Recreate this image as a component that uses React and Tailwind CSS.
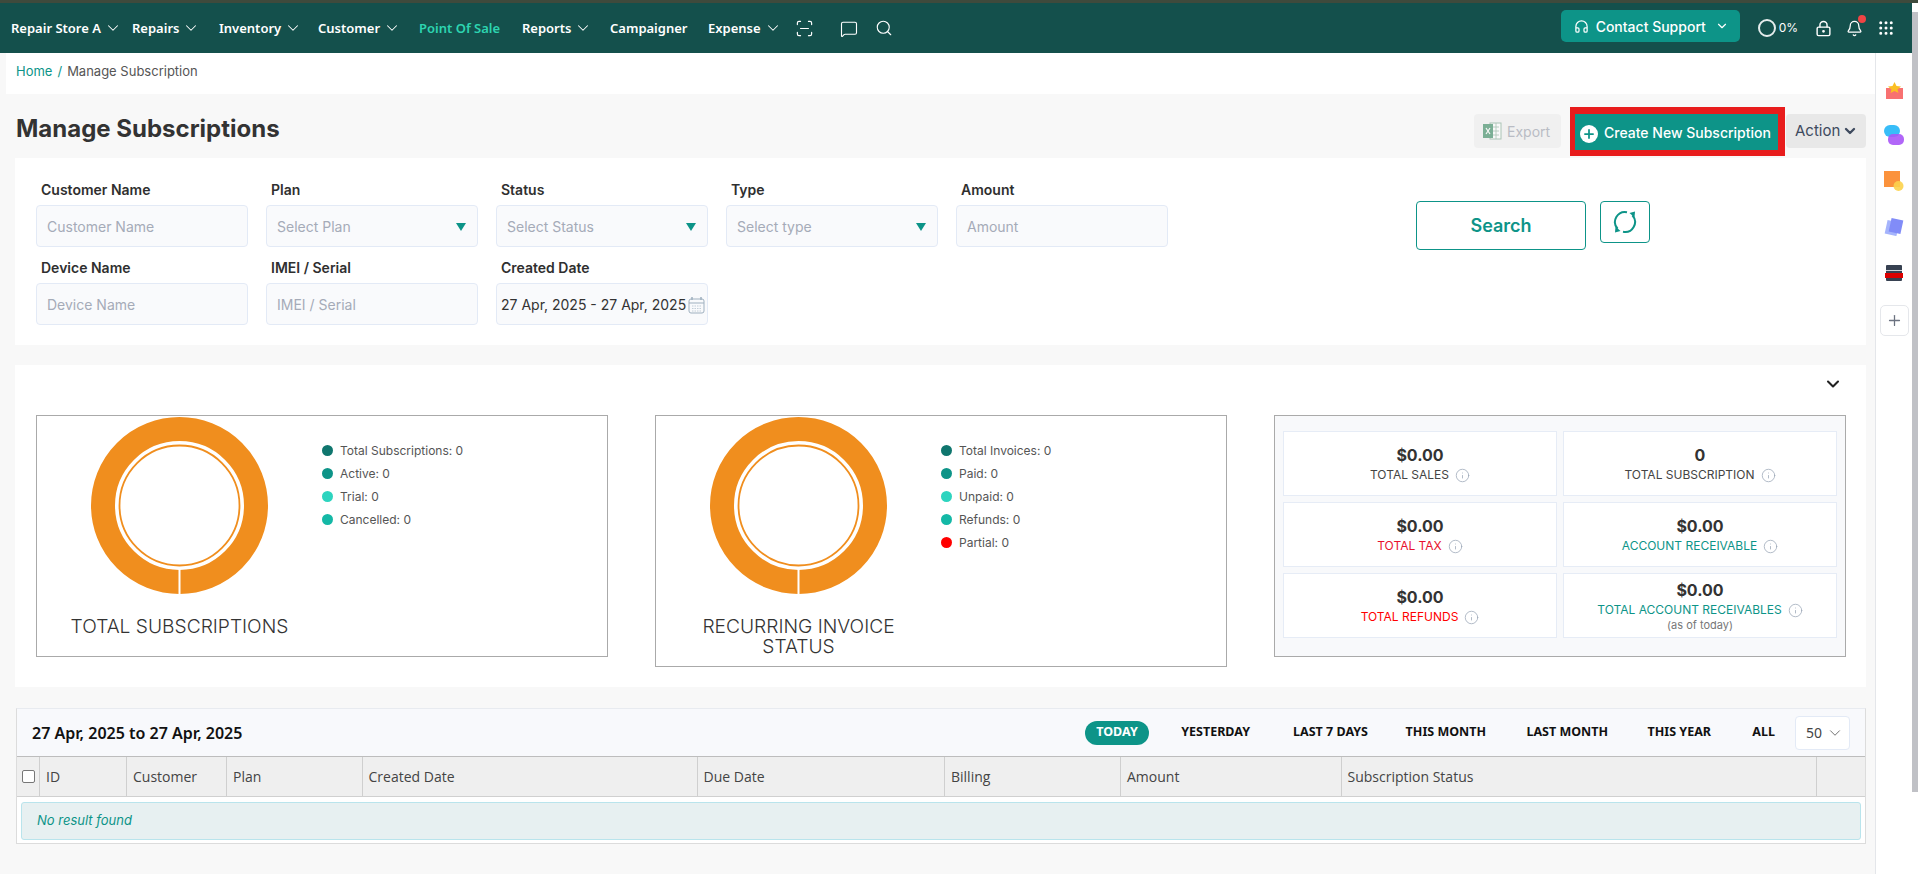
import { ChevronDown, ScanLine, MessageSquare, Search, Headphones, LockKeyhole, Bell, Grip, Info, Plus } from "lucide-react"

const navItems = [
  { label: "Repair Store A", width: "w-[121px]", chevron: true },
  { label: "Repairs", width: "w-[87px]", chevron: true },
  { label: "Inventory", width: "w-[99px]", chevron: true },
  { label: "Customer", width: "w-[101px]", chevron: true },
  { label: "Point Of Sale", width: "w-[103px]", active: true },
  { label: "Reports", width: "w-[88px]", chevron: true },
  { label: "Campaigner", width: "w-[98px]" },
  { label: "Expense", width: "w-[87px]", chevron: true },
]

const columns = ["ID", "Customer", "Plan", "Created Date", "Due Date", "Billing", "Amount", "Subscription Status", ""]
const ranges = [
  { label: "YESTERDAY", width: "w-[101px]" },
  { label: "LAST 7 DAYS", width: "w-[118px]" },
  { label: "THIS MONTH", width: "w-[118px]" },
  { label: "LAST MONTH", width: "w-[122px]" },
  { label: "THIS YEAR", width: "w-[103px]" },
  { label: "ALL", width: "w-[64px]" },
]

const Donut = () => (
  <svg width="177" height="177" viewBox="0 0 177 177">
    <circle cx="88.5" cy="88.5" r="76.5" fill="none" stroke="#f08e1e" strokeWidth="24" />
    <circle cx="88.5" cy="88.5" r="60" fill="none" stroke="#f08e1e" strokeWidth="1.8" />
    <rect x="87.5" y="150" width="2" height="27" fill="#fff" />
  </svg>
)

const ChartBox = ({ title, items, height }) => (
  <div className={`flex w-[572px] border border-[#aaa] bg-white ${height}`}>
    <div className="w-[285px] shrink-0 pt-[1px] flex flex-col items-center">
      <Donut />
      <div className="mt-[22px] max-w-[230px] text-center text-[19.2px] leading-[20px] text-[#333] font-light">{title}</div>
    </div>
    <div className="pt-[23px]">
      {items.map((item) => (
        <div key={item.label} className="flex items-center h-[23px] text-[12px] text-[#555]">
          <span className={`w-[11px] h-[11px] rounded-full mr-[7px] ${item.color}`}></span>
          {item.label}
        </div>
      ))}
    </div>
  </div>
)

const Stat = ({ value, label, color = "text-[#444]", note }) => (
  <div className="h-[65px] border border-[#e6ecf6] bg-white flex flex-col items-center justify-center">
    <div className="text-[16px] leading-[22px] font-bold text-[#333]">{value}</div>
    <div className={`flex items-center text-[12px] leading-[16px] mt-[1px] ${color}`}>
      {label}
      <Info size={15} strokeWidth={1.2} className="ml-[6px] text-[#9aa5b5]" />
    </div>
    {note && <div className="text-[11px] leading-[14px] text-[#777]">{note}</div>}
  </div>
)

const Field = ({ label, placeholder, select, children }) => (
  <div>
    <div className="ml-[5px] mb-[5px] h-[20px] text-[14px] leading-[20px] font-semibold text-[#2f2f2f]">{label}</div>
    <div className="h-[42px] rounded-[4px] border border-[#e3eaf6] bg-[#f9fafc] pt-[1px] pl-[10px] pr-[6px] flex items-center justify-between text-[14px] text-[#a5abb8]">
      {children || placeholder}
      {select && (
        <svg width="12" height="10" viewBox="0 0 12 10" className="mr-[4px]">
          <polygon points="1,1 11,1 6,9" fill="#0d9488" />
        </svg>
      )}
    </div>
  </div>
)

export default function App() {
  return (
    <div className="h-[874px] w-[1918px] overflow-hidden flex flex-col bg-white text-[#333] font-['Inter',sans-serif]">
      <div className="h-[3px] bg-[#3f4a3c] shrink-0"></div>
      <div className="flex flex-1 min-h-0">
        <div className="flex-1 flex flex-col min-w-0">
          {/* top nav */}
          <div className="h-[50px] shrink-0 bg-[#14504c] flex items-center pl-[11px] text-white font-['Noto_Sans',sans-serif] text-[13px] font-semibold">
            {navItems.map((item) => (
              <div key={item.label} className={`${item.width} flex items-center ${item.active ? "text-[#2dd4b0]" : ""}`}>
                <span className="whitespace-nowrap pt-[2px]">{item.label}</span>
                {item.chevron && <ChevronDown size={18} strokeWidth={1.4} className="ml-[3px]" />}
              </div>
            ))}
            <ScanLine size={19} strokeWidth={1.5} />
            <MessageSquare size={18} strokeWidth={1.5} className="ml-[26px] mt-[2px]" />
            <Search size={18} strokeWidth={1.5} className="ml-[17px]" />
            <div className="ml-auto mb-[4px] w-[179px] h-[32px] rounded-[5px] bg-[#0d9488] flex items-center pl-[13px] font-['Inter',sans-serif] text-[14px] font-medium">
              <Headphones size={15} strokeWidth={2} />
              <span className="ml-[7px]">Contact Support</span>
              <ChevronDown size={14} strokeWidth={2} className="ml-[9px]" />
            </div>
            <div className="ml-[18px] w-[18px] h-[18px] rounded-full border-2 border-[#e5ecec]"></div>
            <span className="ml-[3px] text-[12px] font-['Inter',sans-serif] font-normal">0%</span>
            <LockKeyhole size={17} strokeWidth={2} className="ml-[17px]" />
            <div className="relative ml-[14px] flex">
              <Bell size={17} strokeWidth={1.8} />
              <span className="absolute -top-[5px] -right-[3px] w-[8px] h-[8px] rounded-full bg-[#ef4444]"></span>
            </div>
            <Grip size={18} strokeWidth={2} className="ml-[14px] mr-[17px]" />
          </div>

          <div className="flex flex-1 min-h-0">
            <main className="flex-1 min-w-0 bg-[#f8f8f8] border-r border-[#e4e6ea]">
              {/* breadcrumb */}
              <div className="ml-[6px] h-[41px] bg-white pl-[10px] pt-[8px] text-[13px] leading-[20px] text-[#555]">
                <span className="text-[#0d9488]">Home</span>
                <span className="mx-[5px] text-[#0d9488]">/</span>
                Manage Subscription
              </div>

              {/* page header */}
              <div className="h-[64px] flex items-start pl-[16px] pr-[9px]">
                <h1 className="mt-[20px] text-[24px] leading-[30px] font-bold text-[#333]">Manage Subscriptions</h1>
                <div className="ml-auto mt-[20px] w-[87px] h-[34px] rounded-[4px] bg-[#f0f0f0] flex items-center pl-[8px] text-[14px] text-[#b9bcc4]">
                  <svg width="20" height="18" viewBox="0 0 20 18" className="opacity-60">
                    <rect x="8" y="1" width="11" height="16" fill="#fff" stroke="#7fa88f" />
                    <path d="M11 5h6M11 9h6M11 13h6M14 1v16" stroke="#7fa88f" strokeWidth="0.8" />
                    <rect x="1" y="2" width="10" height="14" fill="#2f855a" />
                    <path d="M4 6l4 6M8 6l-4 6" stroke="#fff" strokeWidth="1.2" />
                  </svg>
                  <span className="ml-[5px]">Export</span>
                </div>
                <div className="ml-[9px] mt-[13px] border-[#e81c1c] border-l-[5px] border-r-[7px] border-t-[7px] border-b-[6px]">
                  <div className="w-[203px] h-[36px] bg-[#0d9488] flex items-center pl-[5px] text-[14px] font-medium text-white">
                    <span className="w-[18px] h-[18px] mt-[3px] rounded-full bg-white flex items-center justify-center">
                      <Plus size={14} strokeWidth={3} className="text-[#0d9488]" />
                    </span>
                    <span className="ml-[6px] whitespace-nowrap">Create New Subscription</span>
                  </div>
                </div>
                <div className="ml-[1px] mt-[20px] w-[80px] h-[34px] rounded-[4px] bg-[#e8e8e8] flex items-center pl-[9px] text-[15px] text-[#3e4a5e]">
                  Action
                  <ChevronDown size={16} strokeWidth={3.5} className="ml-[2px]" />
                </div>
              </div>

              {/* filters */}
              <section className="ml-[15px] mr-[9px] h-[187px] bg-white pl-[21px] pt-[22px] flex items-start">
                <div className="grid grid-cols-[repeat(5,212px)] gap-x-[18px] gap-y-[11px]">
                  <Field label="Customer Name" placeholder="Customer Name" />
                  <Field label="Plan" placeholder="Select Plan" select />
                  <Field label="Status" placeholder="Select Status" select />
                  <Field label="Type" placeholder="Select type" select />
                  <Field label="Amount" placeholder="Amount" />
                  <Field label="Device Name" placeholder="Device Name" />
                  <Field label="IMEI / Serial" placeholder="IMEI / Serial" />
                  <Field label="Created Date">
                    <span className="-ml-[6px] whitespace-nowrap text-[#333]">27 Apr, 2025 - 27 Apr, 2025</span>
                    <svg width="17" height="18" viewBox="0 0 17 18" className="-mr-[4px] shrink-0">
                      <rect x="1" y="3" width="15" height="14" rx="2" fill="none" stroke="#9fb0bf" />
                      <path d="M1 7h15" stroke="#9fb0bf" />
                      <path d="M4 1v3M13 1v3" stroke="#9fb0bf" strokeWidth="1.5" />
                      <path d="M4 10h9M4 12.5h9M4 15h9" stroke="#c3ced8" strokeDasharray="1.5 1" />
                    </svg>
                  </Field>
                </div>
                <button className="ml-[248px] mt-[21px] w-[170px] h-[49px] rounded-[4px] border border-[#0d9488] text-[18px] font-semibold text-[#0d9488]">
                  Search
                </button>
                <button className="ml-[14px] mt-[21px] w-[50px] h-[42px] rounded-[4px] border border-[#0d9488] flex items-center justify-center">
                  <svg width="26" height="26" viewBox="0 0 26 26" fill="none" stroke="#0d9488" strokeWidth="2">
                    <path d="M15 3.2A10 10 0 0 0 5.6 19.7" />
                    <path d="M11 22.8A10 10 0 0 0 20.4 6.3" />
                    <polygon points="17.5,4 23,2.5 22.5,8.5" fill="#0d9488" stroke="none" />
                    <polygon points="8.5,22 3,23.5 3.5,17.5" fill="#0d9488" stroke="none" />
                  </svg>
                </button>
              </section>

              {/* charts */}
              <section className="relative ml-[15px] mr-[9px] mt-[20px] h-[322px] bg-white pl-[21px] pt-[50px] flex items-start">
                <ChevronDown size={20} strokeWidth={2.5} className="absolute top-[9px] right-[23px] text-[#222]" />
                <ChartBox
                  title="TOTAL SUBSCRIPTIONS"
                  height="h-[242px]"
                  items={[
                    { label: "Total Subscriptions: 0", color: "bg-[#0f766e]" },
                    { label: "Active: 0", color: "bg-[#0d9488]" },
                    { label: "Trial: 0", color: "bg-[#2dd4bf]" },
                    { label: "Cancelled: 0", color: "bg-[#14b8a6]" },
                  ]}
                />
                <div className="ml-[47px]">
                  <ChartBox
                    title="RECURRING INVOICE STATUS"
                    height="h-[252px]"
                    items={[
                      { label: "Total Invoices: 0", color: "bg-[#0f766e]" },
                      { label: "Paid: 0", color: "bg-[#0d9488]" },
                      { label: "Unpaid: 0", color: "bg-[#2dd4bf]" },
                      { label: "Refunds: 0", color: "bg-[#14b8a6]" },
                      { label: "Partial: 0", color: "bg-[#ff0000]" },
                    ]}
                  />
                </div>
                <div className="ml-[47px] w-[572px] h-[242px] border border-[#aaa] bg-[#f8f9fb] px-[8px] pt-[15px] grid grid-cols-2 gap-x-[6px] gap-y-[6px] content-start">
                  <Stat value="$0.00" label="TOTAL SALES" />
                  <Stat value="0" label="TOTAL SUBSCRIPTION" />
                  <Stat value="$0.00" label="TOTAL TAX" color="text-[#e8112d]" />
                  <Stat value="$0.00" label="ACCOUNT RECEIVABLE" color="text-[#0d9488]" />
                  <Stat value="$0.00" label="TOTAL REFUNDS" color="text-[#ff0000]" />
                  <Stat value="$0.00" label="TOTAL ACCOUNT RECEIVABLES" color="text-[#0d9488]" note="(as of today)" />
                </div>
              </section>

              {/* table */}
              <section className="ml-[16px] mr-[9px] mt-[21px] h-[136px] border border-[#dcdcdc] border-t-[#e8ebf0] bg-white">
                <div className="h-[47px] bg-[#f8f9fc] flex items-center pl-[15px] pr-[15px] font-['Noto_Sans',sans-serif]">
                  <span className="text-[16px] font-semibold text-[#111]">27 Apr, 2025 to 27 Apr, 2025</span>
                  <span className="ml-auto w-[64px] h-[24px] rounded-full bg-[#0d9488] text-white text-[12.5px] font-bold flex items-center justify-center">TODAY</span>
                  {ranges.map((range) => (
                    <span key={range.label} className={`${range.width} text-right text-[12.5px] font-bold text-[#111] whitespace-nowrap`}>{range.label}</span>
                  ))}
                  <div className="ml-[20px] w-[55px] h-[34px] rounded-[4px] border border-[#e3eaf6] bg-white flex items-center pl-[10px] text-[14px] text-[#444]">
                    50
                    <ChevronDown size={18} strokeWidth={1} className="ml-[4px]" />
                  </div>
                </div>
                <div className="h-[41px] bg-[#efefef] border-y border-[#bdbdbd] border-b-[#d0d0d0] grid grid-cols-[22px_87px_100px_135.5px_335px_247.5px_176px_220.5px_475.5px_1fr] font-['Open_Sans',sans-serif] text-[14px] font-medium text-[#444]">
                  <div className="flex items-center pl-[5px]">
                    <span className="w-[13px] h-[13px] rounded-[2px] border border-[#777] bg-white"></span>
                  </div>
                  {columns.map((col) => (
                    <div key={col} className="flex items-center pl-[6px] border-l border-[#cfcfcf]">{col}</div>
                  ))}
                </div>
                <div className="mx-[4px] mt-[5px] h-[38px] rounded-[3px] border border-[#b9e4ec] bg-[#e7f0f1] flex items-center pl-[15px] text-[13px] italic text-[#0d9488]">
                  No result found
                </div>
              </section>
            </main>

            {/* right app rail */}
            <aside className="w-[36px] shrink-0 bg-white flex flex-col items-center pt-[29px]">
              <svg width="17" height="17" viewBox="0 0 17 17">
                <rect x="0" y="6" width="17" height="11" fill="#f87171" />
                <polygon points="8.5,0 10.5,4 15,4.5 11.5,7.5 12.5,11 8.5,9 4.5,11 5.5,7.5 2,4.5 6.5,4" fill="#fbbf24" />
              </svg>
              <svg width="20" height="20" viewBox="0 0 20 20" className="mt-[26px]">
                <rect x="0" y="0" width="16" height="12" rx="6" fill="#38bdf8" />
                <rect x="4" y="9" width="16" height="11" rx="5" fill="#a855f7" opacity="0.9" />
              </svg>
              <svg width="20" height="20" viewBox="0 0 20 20" className="mt-[26px]">
                <rect x="0" y="0" width="16" height="16" fill="#fb923c" />
                <circle cx="14.5" cy="15" r="5" fill="#fcd34d" opacity="0.9" />
              </svg>
              <svg width="20" height="19" viewBox="0 0 20 19" className="mt-[26px]">
                <rect x="2" y="4" width="12" height="14" fill="#a5b4fc" transform="rotate(12 8 11)" />
                <rect x="6" y="2" width="12" height="14" fill="#818cf8" transform="rotate(12 12 9)" />
              </svg>
              <svg width="18" height="16" viewBox="0 0 18 16" className="mt-[29px]">
                <rect x="1" y="0" width="16" height="16" rx="1" fill="#374151" />
                <rect x="1" y="5" width="16" height="1" fill="#d1d5db" />
                <rect x="0" y="8" width="18" height="5" fill="#dc0000" />
              </svg>
              <div className="mt-[24px] w-[29px] h-[31px] rounded-[5px] border border-[#e5e7eb] flex items-center justify-center">
                <Plus size={17} strokeWidth={1.8} className="text-[#6b7280]" />
              </div>
            </aside>
          </div>
        </div>

        {/* scrollbar */}
        <div className="w-[6px] shrink-0 bg-white">
          <div className="mt-[9px] h-[780px] bg-[#c0c1c6]"></div>
        </div>
      </div>
    </div>
  )
}
